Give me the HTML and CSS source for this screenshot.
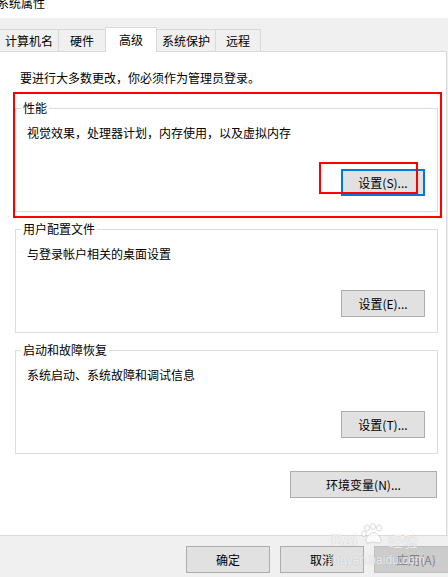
FILE: index.html
```html
<!DOCTYPE html>
<html lang="zh-CN">
<head>
    <meta charset="UTF-8">
    <meta name="viewport" content="width=device-width, initial-scale=1.0">
    <title>系统属性</title>
    <link rel="stylesheet" href="styles.css">
</head>
<body>

    <!-- Title bar (cut off at the top) -->
    <div class="titlebar">
        <div class="title">系统属性</div>
    </div>

    <!-- Tabs -->
    <div class="tabs">
        <div class="tab tab-first">计算机名</div>
        <div class="tab tab-hw">硬件</div>
        <div class="tab active">高级</div>
        <div class="tab tab-prot">系统保护</div>
        <div class="tab tab-remote">远程</div>
    </div>

    <!-- Advanced page -->
    <div class="page">
        <p class="info">要进行大多数更改，你必须作为管理员登录。</p>

        <fieldset class="group group-first">
            <legend>性能</legend>
            <p class="desc">视觉效果，处理器计划，内存使用，以及虚拟内存</p>
            <div class="group-actions">
                <button class="btn focused">设置(S)...</button>
            </div>
        </fieldset>

        <fieldset class="group">
            <legend>用户配置文件</legend>
            <p class="desc">与登录帐户相关的桌面设置</p>
            <div class="group-actions">
                <button class="btn">设置(E)...</button>
            </div>
        </fieldset>

        <fieldset class="group">
            <legend>启动和故障恢复</legend>
            <p class="desc">系统启动、系统故障和调试信息</p>
            <div class="group-actions">
                <button class="btn">设置(T)...</button>
            </div>
        </fieldset>

        <div class="env-row">
            <button class="btn btn-wide">环境变量(N)...</button>
        </div>

        <!-- Red annotation boxes -->
        <div class="mark mark-big"></div>
        <div class="mark mark-small"></div>
    </div>

    <!-- Dialog buttons -->
    <div class="bottombar">
        <button class="btn">确定</button>
        <button class="btn">取消</button>
        <button class="btn disabled">应用(A)</button>

        <!-- Watermark -->
        <div class="wm wm-bai">Bai</div>
        <svg class="wm-paw" width="25" height="22" viewBox="0 0 25 22">
            <g fill="rgba(255,255,255,0.75)" stroke="rgba(170,170,170,0.45)" stroke-width="1">
                <ellipse cx="6" cy="5" rx="2.5" ry="3.2"/>
                <ellipse cx="12" cy="3.5" rx="2.5" ry="3"/>
                <ellipse cx="18" cy="5" rx="2.5" ry="3.2"/>
                <ellipse cx="3" cy="11" rx="2.2" ry="2.8"/>
                <path d="M7 20 C3 20 5 14 9 11 C11 9 14 9 16 11 C20 14 22 20 18 20 C15 20 14 19 12.5 19 C11 19 10 20 7 20 Z"/>
            </g>
        </svg>
        <div class="wm wm-jy">经验</div>
        <div class="wm wm-url">jingyan.baidu.com</div>
    </div>

</body>
</html>
```

FILE: styles.css
```css
/* Global */
body {
    margin: 0;
    width: 448px;
    height: 577px;
    overflow: hidden;
    background-color: #f0f0f0;
    font-family: "Noto Sans CJK SC", "Microsoft YaHei", sans-serif;
    font-size: 12px;
    color: #000;
}

p {
    margin: 0;
}

/* Title bar */
.titlebar {
    display: flow-root;
    height: 18px;
    background-color: #fff;
}

.title {
    margin: -5px 0 0 -3px;
    line-height: 16px;
}

/* Tabs */
.tabs {
    display: flex;
    align-items: flex-end;
    height: 34px;
    position: relative;
    z-index: 1;
}

.tab {
    box-sizing: border-box;
    height: 22px;
    margin-bottom: 1px;
    width: 59px;
    display: flex;
    align-items: center;
    justify-content: center;
    background-color: #f0f0f0;
    border-top: 1px solid #d9d9d9;
    border-right: 1px solid #d9d9d9;
}

.tab-hw {
    width: 47px;
}

.tab-prot {
    width: 59px;
}

.tab-remote {
    width: 45px;
}

.tab.active {
    width: 52px;
    height: 25px;
    margin-bottom: 0;
    margin-left: -1px;
    background-color: #fff;
    border-left: 1px solid #d9d9d9;
    padding-bottom: 2px;
}

/* Page */
.page {
    box-sizing: border-box;
    position: relative;
    width: 447px;
    height: 484px;
    margin-top: -1px;
    padding-top: 18px;
    background-color: #fff;
    border-top: 1px solid #d9d9d9;
    border-right: 1px solid #d9d9d9;
}

.info {
    margin-left: 20px;
    line-height: 16px;
}

/* Group boxes */
.group {
    box-sizing: border-box;
    width: 423px;
    margin: 9px 0 0 15px;
    padding: 0 12px 15px 11px;
    border: 1px solid #dcdcdc;
    min-width: 0;
}

.group-first {
    margin-top: 14px;
}

.group legend {
    margin-left: -6px;
    padding: 0 2px;
    line-height: 16px;
}

.desc {
    margin-top: 9px;
    line-height: 16px;
}

.group-actions {
    display: flex;
    justify-content: flex-end;
    margin-top: 28px;
}

.env-row {
    display: flex;
    justify-content: flex-end;
    width: 437px;
    margin-top: 17px;
}

/* Buttons */
.btn {
    box-sizing: border-box;
    flex-shrink: 0;
    width: 84px;
    height: 27px;
    padding: 0;
    background-color: #e1e1e1;
    border: 1px solid #adadad;
    font-family: inherit;
    font-size: 12px;
    color: #000;
}

.btn.focused {
    border: 2px solid #0078d7;
}

.btn-wide {
    width: 147px;
}

.btn.disabled {
    background-color: #cccccc;
    border-color: #bfbfbf;
    color: #838383;
}

/* Annotation marks */
.mark {
    position: absolute;
    box-sizing: border-box;
    border: 2px solid #f00;
}

.mark-big {
    left: 13px;
    top: 40px;
    width: 429px;
    height: 126px;
}

.mark-small {
    left: 319px;
    top: 110px;
    width: 99px;
    height: 32px;
}

/* Bottom bar */
.bottombar {
    position: relative;
    display: flex;
    gap: 10px;
    padding: 10px 0 0 186px;
    border-top: 1px solid #dadada;
    height: 42px;
    box-sizing: border-box;
    overflow: visible;
}

/* Watermark */
.wm {
    position: absolute;
    color: rgba(255, 255, 255, 0.75);
    text-shadow: 0 0 1px rgba(140, 140, 140, 0.5);
    white-space: nowrap;
}

.wm-bai {
    left: 331px;
    top: -3px;
    font-family: "Liberation Sans", Arial, sans-serif;
    font-weight: bold;
    font-size: 17px;
    line-height: 16px;
}

.wm-paw {
    position: absolute;
    left: 361px;
    top: -13px;
}

.wm-jy {
    left: 388px;
    top: -3px;
    font-size: 15px;
    line-height: 16px;
}

.wm-url {
    left: 328px;
    top: 17px;
    font-family: "Liberation Sans", Arial, sans-serif;
    font-size: 12px;
    line-height: 14px;
}
```
